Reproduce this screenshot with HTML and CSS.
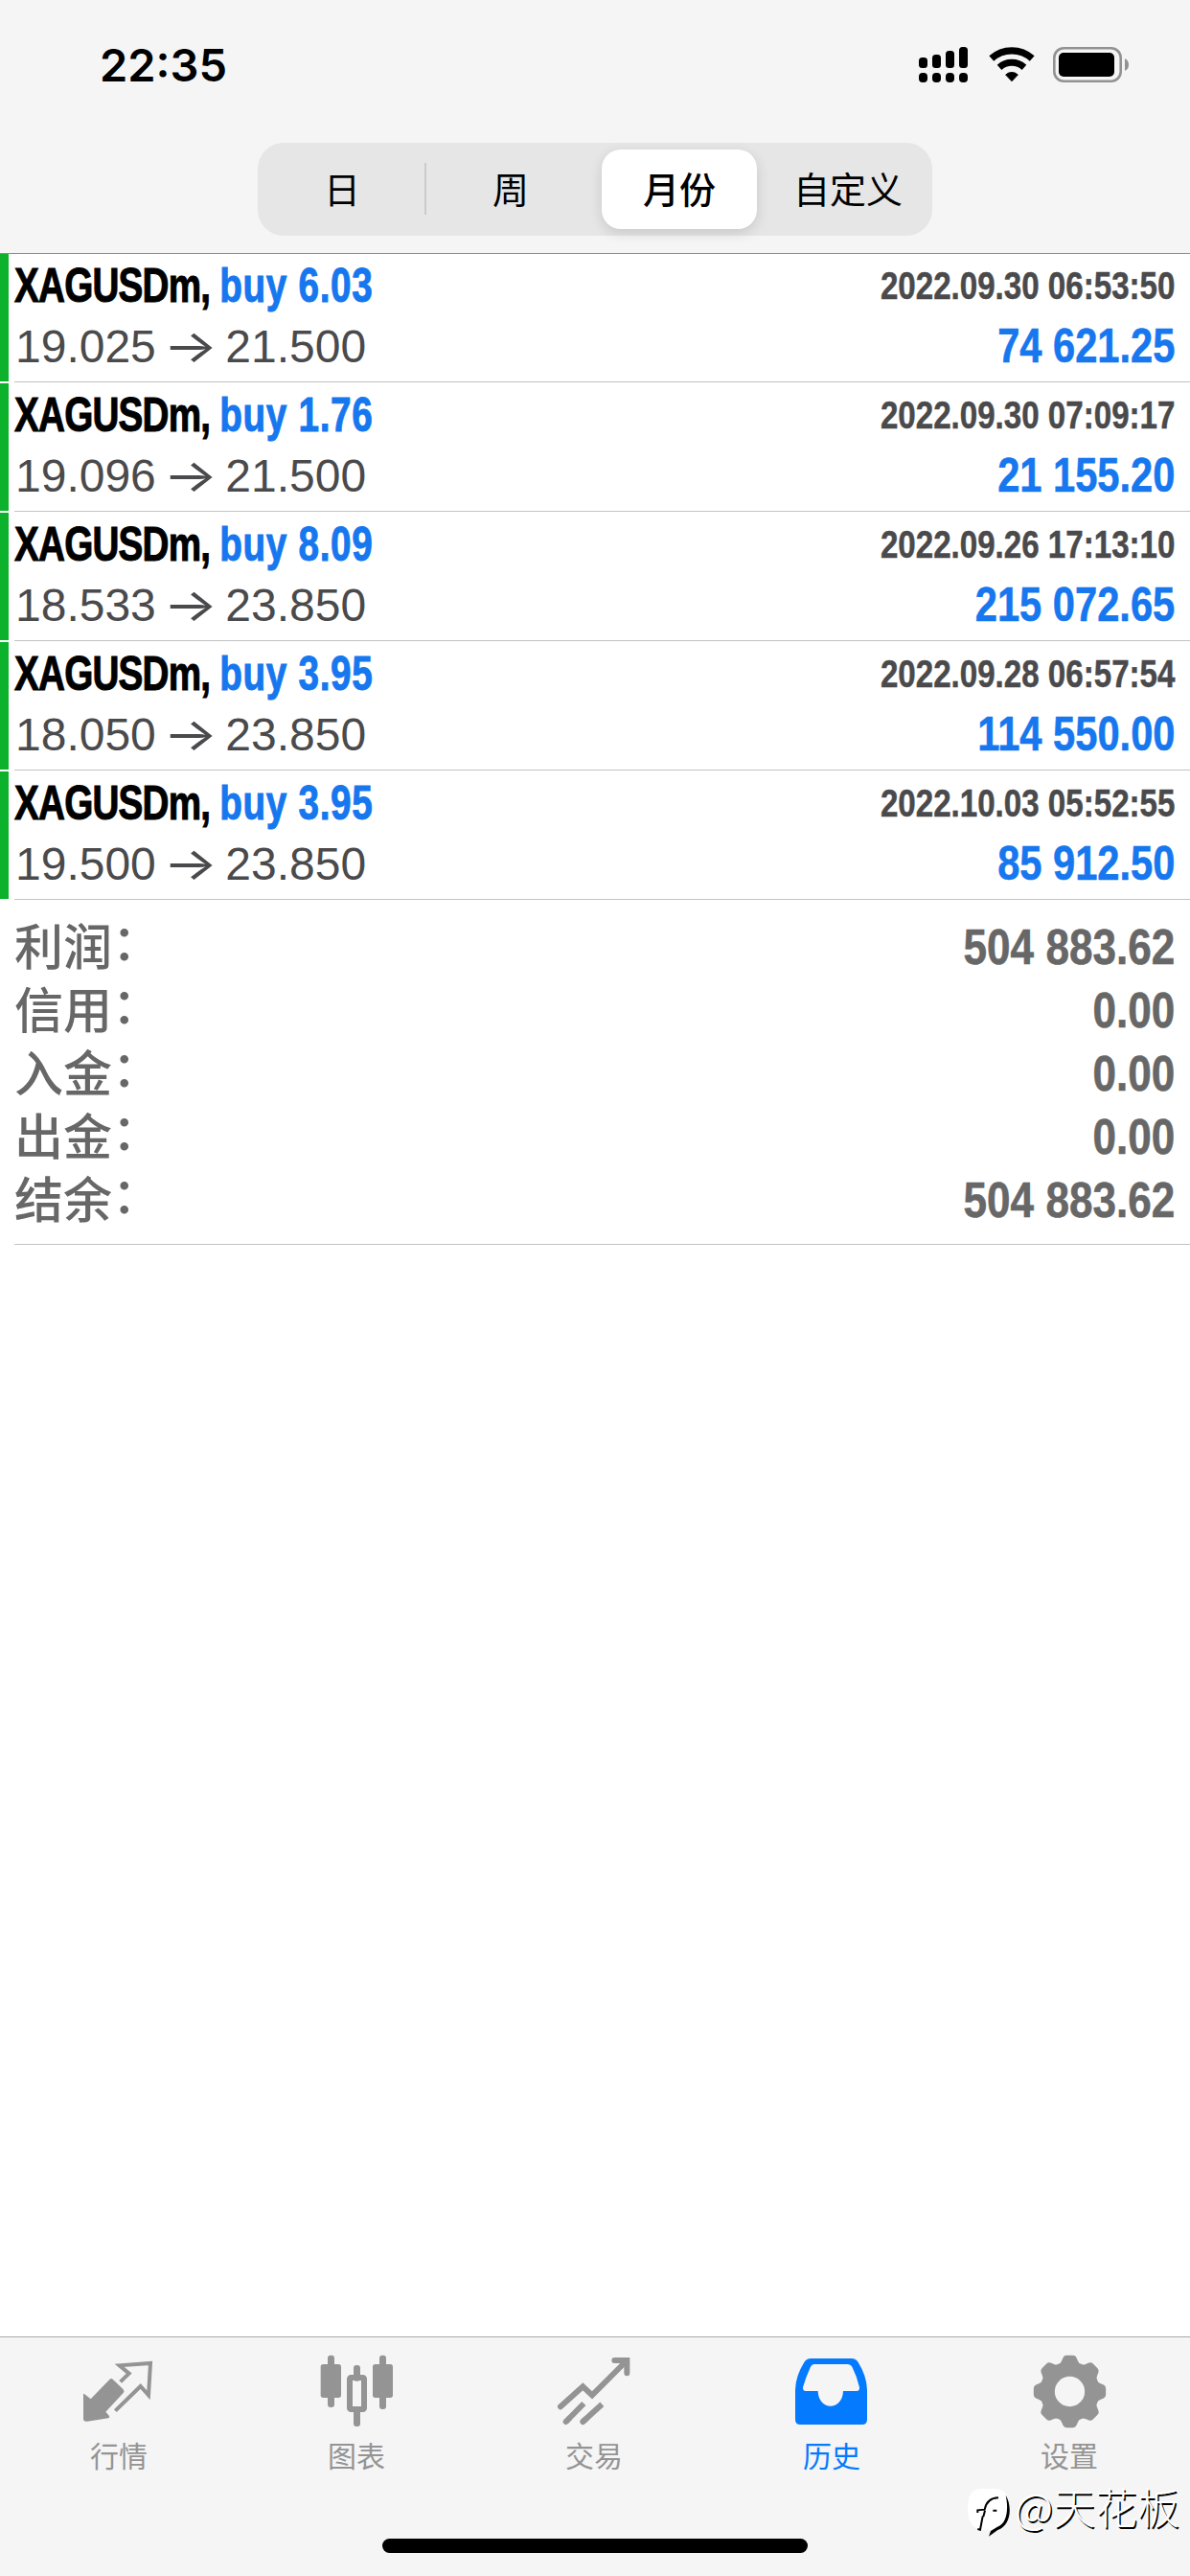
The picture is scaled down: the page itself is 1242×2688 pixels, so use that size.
FILE: index.html
```html
<!DOCTYPE html>
<html lang="zh-CN">
<head>
  <meta charset="UTF-8" />
  <meta name="viewport" content="width=device-width, initial-scale=1.0" />
  <title>历史</title>
  <link rel="stylesheet" href="styles.css">
</head>
<body>
  <header>
    <div class="status-bar">
      <span class="time">22:35</span>
      <div class="status-icons">
        <svg width="52" height="37" viewBox="0 0 52 37">
          <rect x="0" y="11" width="9" height="11" rx="3.5" />
          <rect x="14" y="8" width="9" height="14" rx="3.5" />
          <rect x="28" y="4" width="9" height="18" rx="3.5" />
          <rect x="42" y="0" width="9" height="22" rx="3.5" />
          <rect x="0" y="27" width="9" height="10" rx="4" />
          <rect x="14" y="27" width="9" height="10" rx="4" />
          <rect x="28" y="27" width="9" height="10" rx="4" />
          <rect x="42" y="27" width="9" height="10" rx="4" />
        </svg>
        <svg class="wifi" width="48" height="37" viewBox="245 42 144 111">
          <path d="M253.4 78 A95 95 0 0 1 380.6 78" fill="none" stroke="#000" stroke-width="22" />
          <path d="M278.2 106 A58 58 0 0 1 355.8 106" fill="none" stroke="#000" stroke-width="21" />
          <path d="M317 149 L298 129 A28 28 0 0 1 336 129 Z" stroke="#000" stroke-width="3" stroke-linejoin="round" />
        </svg>
        <svg class="battery" width="80" height="37" viewBox="0 0 80 37">
          <rect x="1.3" y="1.3" width="69.4" height="34.4" rx="10" fill="none" stroke="#929292" stroke-width="2.6" />
          <rect x="6" y="6" width="58" height="25" rx="5" />
          <path d="M75 12 Q79 14 79 18.500 Q79 23 75 25 Z" fill="#929292" />
        </svg>
      </div>
    </div>
    <div class="segment">
      <button>日</button>
      <button class="line">周</button>
      <button class="active">月份</button>
      <button>自定义</button>
    </div>
  </header>

  <main>
    <ul class="deals">
      <li>
        <div class="row"><span class="symbol">XAGUSDm, <b>buy 6.03</b></span><span class="date">2022.09.30 06:53:50</span></div>
        <div class="row"><span class="price">19.025 <i>→</i> 21.500</span><span class="profit">74 621.25</span></div>
      </li>
      <li>
        <div class="row"><span class="symbol">XAGUSDm, <b>buy 1.76</b></span><span class="date">2022.09.30 07:09:17</span></div>
        <div class="row"><span class="price">19.096 <i>→</i> 21.500</span><span class="profit">21 155.20</span></div>
      </li>
      <li>
        <div class="row"><span class="symbol">XAGUSDm, <b>buy 8.09</b></span><span class="date">2022.09.26 17:13:10</span></div>
        <div class="row"><span class="price">18.533 <i>→</i> 23.850</span><span class="profit">215 072.65</span></div>
      </li>
      <li>
        <div class="row"><span class="symbol">XAGUSDm, <b>buy 3.95</b></span><span class="date">2022.09.28 06:57:54</span></div>
        <div class="row"><span class="price">18.050 <i>→</i> 23.850</span><span class="profit">114 550.00</span></div>
      </li>
      <li>
        <div class="row"><span class="symbol">XAGUSDm, <b>buy 3.95</b></span><span class="date">2022.10.03 05:52:55</span></div>
        <div class="row"><span class="price">19.500 <i>→</i> 23.850</span><span class="profit">85 912.50</span></div>
      </li>
    </ul>
    <div class="summary">
      <div><span>利润<i>：</i></span><b>504 883.62</b></div>
      <div><span>信用<i>：</i></span><b>0.00</b></div>
      <div><span>入金<i>：</i></span><b>0.00</b></div>
      <div><span>出金<i>：</i></span><b>0.00</b></div>
      <div><span>结余<i>：</i></span><b>504 883.62</b></div>
    </div>
  </main>

  <footer>
    <nav>
      <a>
        <svg viewBox="252 105 240 240">
          <path d="M261 236 Q261 231 265 235 L284 250 L343 189 Q348 183 353 188 L386 220 Q391 226 386 231 L331 290 L342 303 Q345 308 339 310 L273 320 Q261 321 261 312 Z" />
          <path d="M377 196 L404 170 L374 145 L471 138 L465 238 L440 210 L361 287" fill="none" stroke="currentColor" stroke-width="12" stroke-linejoin="miter" />
        </svg>
        行情
      </a>
      <a>
        <svg viewBox="996 105 240 240">
          <rect x="1026" y="113" width="21" height="163" rx="9" />
          <rect x="1004" y="141" width="64" height="105" rx="8" />
          <rect x="1107" y="144" width="21" height="50" rx="9" />
          <rect x="1107" y="280" width="21" height="56" rx="9" />
          <rect x="1095" y="183" width="45" height="99" rx="4" fill="none" stroke="currentColor" stroke-width="18" />
          <rect x="1188" y="113" width="21" height="169" rx="9" />
          <rect x="1167" y="141" width="63" height="105" rx="8" />
        </svg>
        图表
      </a>
      <a>
        <svg viewBox="299 105 240 240">
          <g fill="none" stroke="currentColor" stroke-width="18" stroke-linecap="round" stroke-linejoin="miter">
            <path d="M314 274 L384 211 L413 238 L519 132" />
            <path d="M483 129 L522 129 L522 169" />
            <path d="M331 321 L387 264" stroke-linecap="butt" />
            <path d="M331 321 L340 312 M384 321 L393 313" />
            <path d="M384 321 L444 266" stroke-linecap="butt" />
          </g>
        </svg>
        交易
      </a>
      <a class="active">
        <svg viewBox="1044 105 240 240">
          <path fill-rule="evenodd" d="M1100 123 H1226 Q1240 123 1247 135 Q1274 178 1275 221 V314 Q1275 330 1259 330 H1066 Q1050 330 1050 314 V221 Q1051 178 1078 135 Q1085 123 1100 123 Z M1109 141 Q1102 141 1098 149 Q1083 181 1074 213 Q1073 225 1083 225 H1121 C1123 288 1198 288 1200 225 H1242 Q1252 225 1251 213 Q1244 181 1228 149 Q1224 141 1214 141 Z" />
        </svg>
        历史
      </a>
      <a>
        <svg viewBox="408 105 240 240">
          <g transform="translate(529.5 226.5)">
            <circle r="70" fill="none" stroke="currentColor" stroke-width="46" />
            <path id="tooth" d="M-36 -84 Q-28 -88 -25 -97 L-21 -106 Q-18 -113 -10 -113 H10 Q18 -113 21 -106 L25 -97 Q28 -88 36 -84 L30 -72 H-30 Z" />
            <use href="#tooth" transform="rotate(45)" />
            <use href="#tooth" transform="rotate(90)" />
            <use href="#tooth" transform="rotate(135)" />
            <use href="#tooth" transform="rotate(180)" />
            <use href="#tooth" transform="rotate(225)" />
            <use href="#tooth" transform="rotate(270)" />
            <use href="#tooth" transform="rotate(315)" />
          </g>
        </svg>
        设置
      </a>
    </nav>
    <div class="home-indicator"></div>
  </footer>

  <div class="watermark">
    <svg width="46" height="53" viewBox="21 32 138 159">
      <path d="M62 38 H112 Q152 40 152 90 Q152 150 115 158 L92 178 L94 166 H66 Q24 160 24 102 Q24 40 62 38 Z" fill="#fff" />
      <path d="M55 113 V105 L77 103 Q84 67 120 66 M78 106 L73 125 M71 124 L63 166 L55 164 M103 106 H115" fill="none" stroke="#000" stroke-width="6" />
      <path d="M143 58 C164 92 160 154 118 167 L90 187 L96 170 L117 157 C148 146 152 100 143 58 Z" />
    </svg>
    <span>@天花板</span>
  </div>
</body>
</html>
```
FILE: styles.css
```css
:root {
  --blue: #1677ee;
  --bar: #f5f5f5;
  --gray: #949494;
}

* {
  margin: 0;
  padding: 0;
  box-sizing: border-box;
}

body {
  font-family: "Liberation Sans", "Noto Sans CJK SC", sans-serif;
  background-color: #fff;
  color: #000;
  height: 2688px;
  display: flex;
  flex-direction: column;
  overflow: hidden;
}

header {
  height: 265px;
  background-color: var(--bar);
  border-bottom: 1px solid #8c8c8c;
}

.status-bar {
  height: 149px;
  padding: 38px 63px 0 104px;
  display: flex;
  justify-content: space-between;
}

.time {
  font: 600 47px/60px Inter, sans-serif;
}

.status-icons {
  display: flex;
  padding-top: 11px;
}

.wifi {
  margin-left: 21px;
}

.battery {
  margin-left: 19px;
}

.segment {
  width: 704px;
  height: 97px;
  margin: 0 auto;
  padding: 7px 0;
  border-radius: 27px;
  background-color: #e6e6e7;
  display: flex;
}

.segment button {
  width: 176px;
  padding-bottom: 4px;
  border: none;
  background: none;
  color: #000;
  font: 400 38px "Noto Sans CJK SC", sans-serif;
}

.segment .line {
  position: relative;
}

.segment .line::before {
  content: "";
  position: absolute;
  left: -2px;
  top: 14px;
  width: 2px;
  height: 54px;
  background-color: #cbcbcd;
}

.segment .active {
  width: 162px;
  margin: 0 7px;
  background-color: #fff;
  border-radius: 20px;
  font-weight: 500;
  box-shadow: 0 4px 14px #00000022;
}

.deals {
  list-style: none;
}

.deals li {
  height: 135px;
  padding: 2px 16px 0 15px;
  background: linear-gradient(#0cb22c, #0cb22c) 0 0 / 9px 133px no-repeat,
    linear-gradient(#c2c2c2, #c2c2c2) 15px 133px / 100% 1px no-repeat;
}

.row {
  display: flex;
  justify-content: space-between;
  height: 63px;
  line-height: 63px;
  font-size: 48px;
  white-space: nowrap;
}

.symbol,
.date,
.profit,
.summary b {
  font-weight: bold;
}

/* condensed bold */
.symbol {
  font-size: 50px;
  letter-spacing: -1px;
  -webkit-text-stroke: 1px;
  transform: scaleX(0.773);
  transform-origin: left;
}

.symbol b {
  color: var(--blue);
  letter-spacing: 0.9px;
}

.date {
  font-size: 40px;
  color: #4a4a4c;
  -webkit-text-stroke: 0.5px;
  transform: scaleX(0.828);
  transform-origin: right;
}

.price {
  margin-left: 1px;
  color: #4a4a4c;
}

.price i {
  display: inline-block;
  font: 400 48px/50px Inter, sans-serif;
  transform: scaleX(1.25);
}

.profit {
  font-size: 50px;
  color: var(--blue);
  -webkit-text-stroke: 0.6px;
  transform: scaleX(0.833);
  transform-origin: right;
}

.summary {
  margin-left: 15px;
  padding: 15px 16px 0 0;
  height: 359px;
  border-bottom: 1px solid #c2c2c2;
  color: #676767;
}

.summary div {
  display: flex;
  justify-content: space-between;
  height: 66px;
  line-height: 66px;
}

.summary span {
  font: 500 51px/60px "Noto Sans CJK SC", sans-serif;
}

.summary i {
  position: relative;
  top: -5px;
  font-style: normal;
}

.summary b {
  font-size: 52px;
  -webkit-text-stroke: 0.6px;
  transform: scaleX(0.848);
  transform-origin: right;
}

footer {
  margin-top: auto;
  height: 250px;
  background-color: var(--bar);
  border-top: 1px solid #a8a8a8;
}

nav {
  display: flex;
  height: 210px;
  padding-top: 16px;
}

nav a {
  width: 248px;
  display: flex;
  flex-direction: column;
  align-items: center;
  color: var(--gray);
  fill: currentColor;
  font: 400 30px/44px "Noto Sans CJK SC", sans-serif;
}

nav a.active {
  color: #047aff;
}

nav svg {
  width: 80px;
  height: 80px;
  margin-bottom: 4px;
}

.home-indicator {
  width: 444px;
  height: 15px;
  margin: 0 auto;
  border-radius: 8px;
  background-color: #000;
}

.watermark {
  position: absolute;
  right: 11px;
  top: 2590px;
  display: flex;
  height: 56px;
  color: #fff;
  font: 300 44px/56px "Noto Sans CJK SC", sans-serif;
  text-shadow: 1.5px 1.5px 0 #000;
}

.watermark svg {
  margin: 5px 4px 0 0;
}

.watermark span {
  margin-top: -3px;
}
```
